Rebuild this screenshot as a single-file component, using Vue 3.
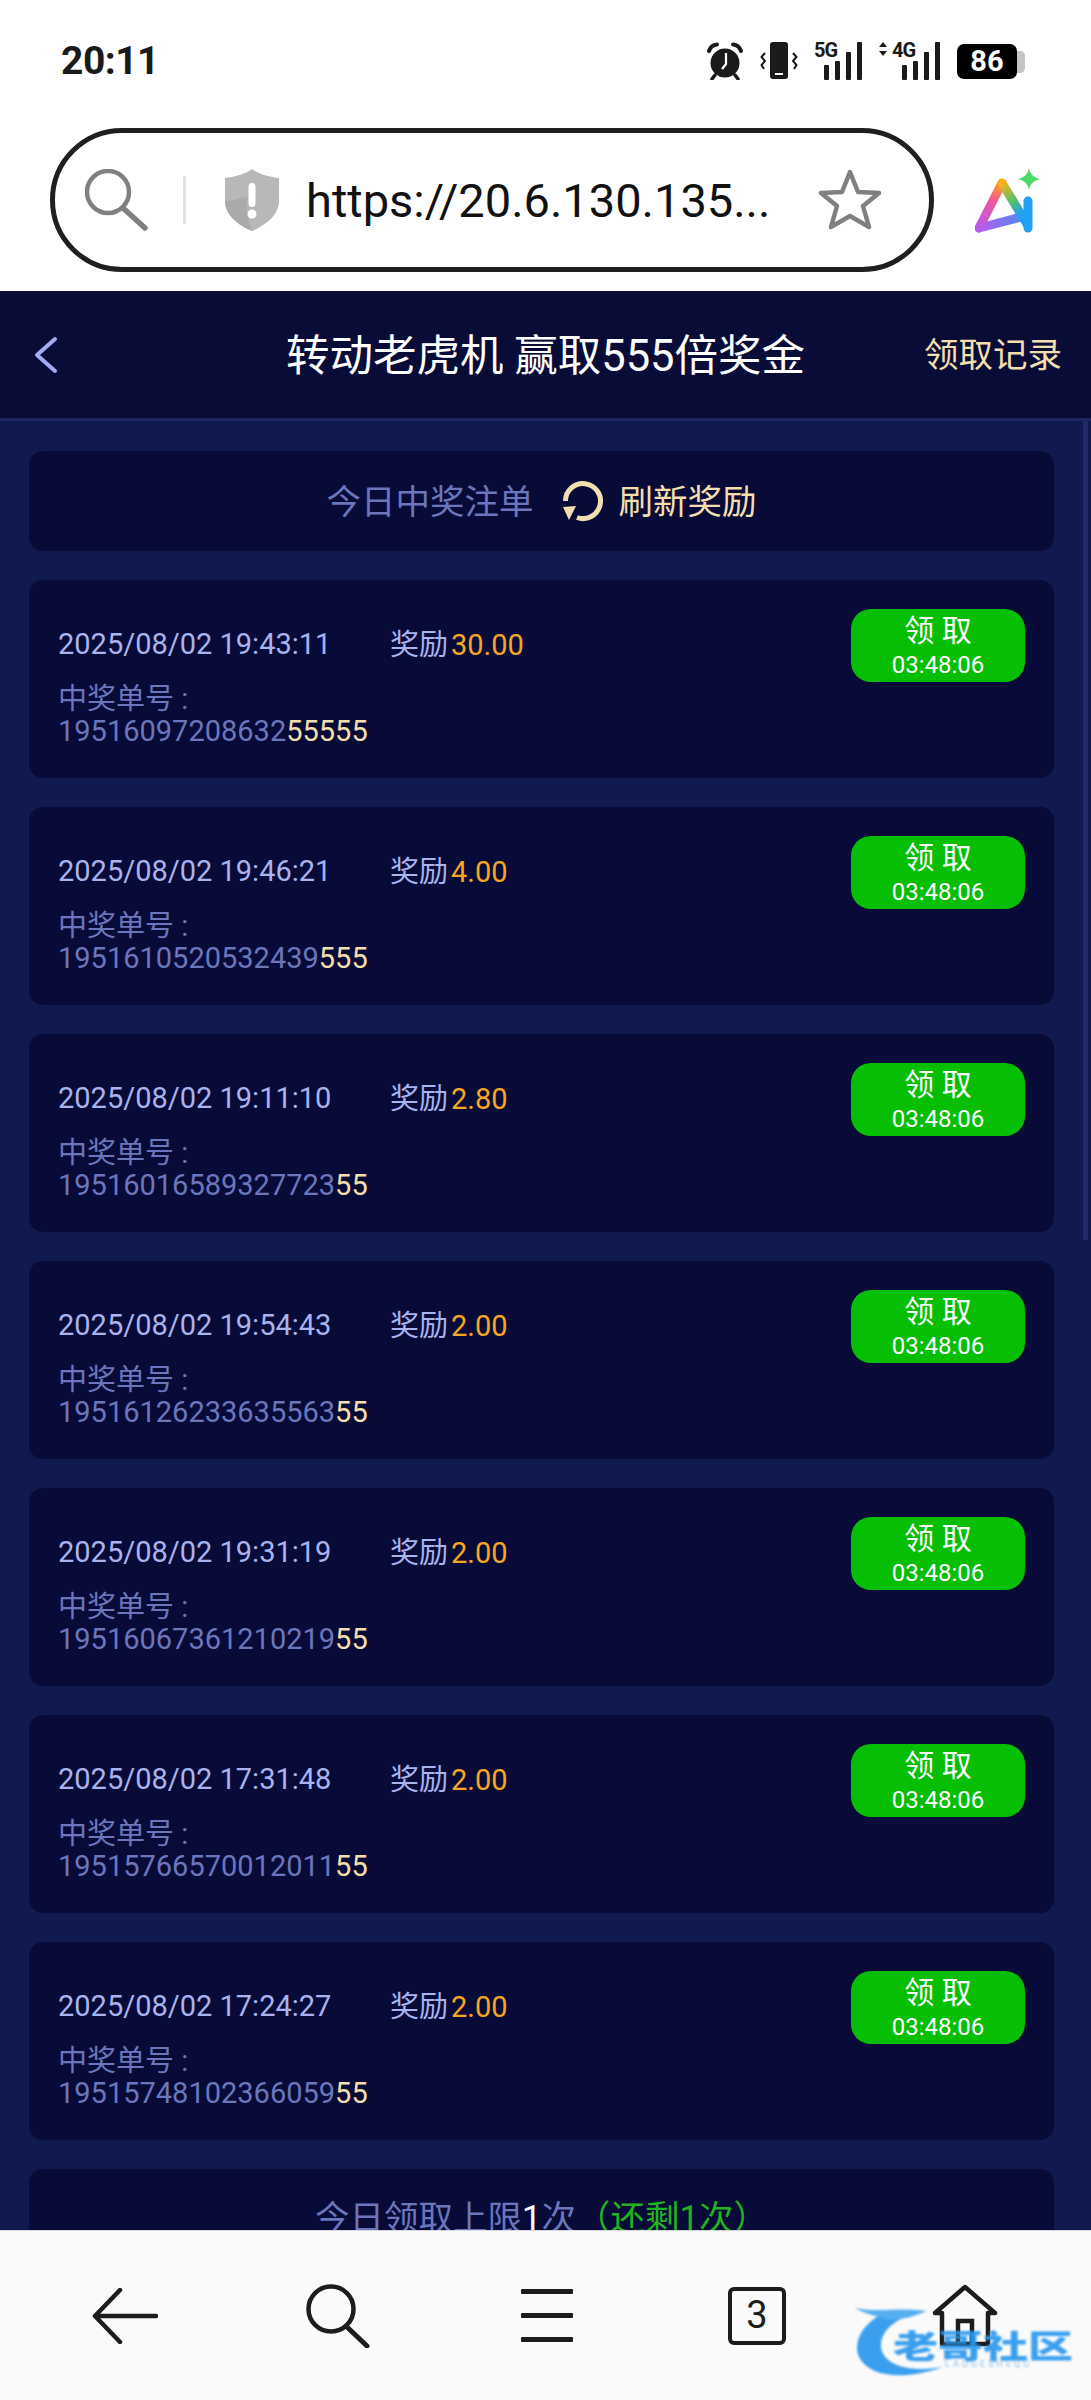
<template>
  <div class="phone">
    <div class="browser-top">
      <div class="status-bar">
        <span class="clock">20:11</span>
        <div class="status-icons">
          <svg width="38" height="38" viewBox="0 0 38 38">
            <circle cx="19" cy="21" r="14.5" fill="#1a1a1a" />
            <path d="M3 9 Q5 3 11 2.5 M35 9 Q33 3 27 2.5" fill="none" stroke="#1a1a1a" stroke-width="4" stroke-linecap="round" />
            <path d="M9 33 L6 37 M29 33 L32 37" stroke="#1a1a1a" stroke-width="3.5" stroke-linecap="round" />
            <path d="M20 11 V22 L16 27" fill="none" stroke="#fff" stroke-width="2.2" />
          </svg>
          <svg width="38" height="38" viewBox="0 0 38 38">
            <rect x="10" y="0" width="18" height="37" rx="3" fill="#1a1a1a" />
            <rect x="15" y="31" width="8" height="2" fill="#fff" />
            <path d="M5 11 L1.5 15 L5 19 L1.5 23 L4 27 M33 11 L36.5 15 L33 19 L36.5 23 L34 27" fill="none" stroke="#1a1a1a" stroke-width="2" />
          </svg>
          <div class="signal">
            <span class="net-label">5G</span>
            <svg width="49" height="38" viewBox="0 0 49 38">
              <rect x="10" y="23" width="5" height="15" rx="1" fill="#1a1a1a" />
              <rect x="21" y="19" width="5" height="19" rx="1" fill="#1a1a1a" />
              <rect x="32" y="10" width="5" height="28" rx="1" fill="#1a1a1a" />
              <rect x="43" y="0" width="5" height="38" rx="1" fill="#1a1a1a" />
            </svg>
          </div>
          <div class="signal">
            <span class="net-label net-label-4g">4G</span>
            <svg width="62" height="38" viewBox="0 0 62 38">
              <path d="M4 0 L8 5 H0 Z M4 14 L8 9 H0 Z" fill="#1a1a1a" />
              <rect x="23" y="23" width="5" height="15" rx="1" fill="#1a1a1a" />
              <rect x="34" y="19" width="5" height="19" rx="1" fill="#1a1a1a" />
              <rect x="45" y="10" width="5" height="28" rx="1" fill="#1a1a1a" />
              <rect x="56" y="0" width="5" height="38" rx="1" fill="#1a1a1a" />
            </svg>
          </div>
          <div class="battery"><span class="battery-level">86</span><i class="battery-cap"></i></div>
        </div>
      </div>
      <div class="address-row">
        <div class="address-bar">
          <svg class="addr-search" width="64" height="62" viewBox="0 0 64 62">
            <circle cx="23" cy="23" r="21" fill="none" stroke="#808080" stroke-width="4.5" />
            <path d="M38 39 L60 59" stroke="#808080" stroke-width="5.5" stroke-linecap="round" />
          </svg>
          <i class="addr-divider"></i>
          <svg class="addr-shield" width="56" height="62" viewBox="0 0 56 62">
            <path d="M28 0 C34 5 46 8 55 9 V32 C55 46 42 56 28 62 C14 56 1 46 1 32 V9 C10 8 22 5 28 0 Z" fill="#b8b8b8" />
            <path d="M1 32 C1 46 14 56 28 62 C24 50 20 38 24 28 C14 30 6 32 1 32 Z" fill="#aaaaaa" />
            <rect x="24.500" y="14" width="7" height="24" rx="3.500" fill="#fff" />
            <circle cx="28" cy="45" r="4.500" fill="#fff" />
          </svg>
          <span class="addr-url">https://20.6.130.135...</span>
          <svg class="addr-star" width="64" height="62" viewBox="0 0 64 62">
            <path d="M32 3 L40 23 L61 24 L45 37 L51 58 L32 47 L13 58 L19 37 L3 24 L24 23 Z" fill="none" stroke="#808080" stroke-width="4.500" stroke-linejoin="round" />
          </svg>
        </div>
        <svg class="ai-icon" width="68" height="66" viewBox="0 0 68 66">
          <defs>
            <linearGradient id="aiLeft" gradientUnits="userSpaceOnUse" x1="4" y1="60" x2="27" y2="15">
              <stop offset="0" stop-color="#b85cf0" />
              <stop offset="0.6" stop-color="#f0569a" />
              <stop offset="1" stop-color="#ffa516" />
            </linearGradient>
            <linearGradient id="aiBase" gradientUnits="userSpaceOnUse" x1="4" y1="60" x2="50" y2="48">
              <stop offset="0" stop-color="#b85cf0" />
              <stop offset="1" stop-color="#4a8cf5" />
            </linearGradient>
            <linearGradient id="aiRight" gradientUnits="userSpaceOnUse" x1="27" y1="15" x2="52" y2="56">
              <stop offset="0" stop-color="#ffb01a" />
              <stop offset="0.45" stop-color="#4fc06f" />
              <stop offset="0.75" stop-color="#22a0f5" />
            </linearGradient>
          </defs>
          <path d="M4 60 L50 48" fill="none" stroke="url(#aiBase)" stroke-width="9" stroke-linecap="round" />
          <path d="M4 60 L27 15" fill="none" stroke="url(#aiLeft)" stroke-width="9" stroke-linecap="round" />
          <path d="M27 15 L52 56" fill="none" stroke="url(#aiRight)" stroke-width="9" stroke-linecap="round" />
          <path d="M53 33 V60" fill="none" stroke="#22a0f5" stroke-width="9" stroke-linecap="round" />
          <path d="M54 0 C55 6 58 9 65 11 C58 13 55 16 54 22 C53 16 50 13 43 11 C50 9 53 6 54 0 Z" fill="#4cd964" />
        </svg>
      </div>
    </div>

    <header class="nav-bar">
      <svg class="nav-back" width="24" height="38" viewBox="0 0 24 38">
        <path d="M21 3 L3 19 L21 35" fill="none" stroke="#a3abf2" stroke-width="4" stroke-linecap="round" stroke-linejoin="round" />
      </svg>
      <h1 class="nav-title">转动老虎机 赢取555倍奖金</h1>
      <span class="nav-record">领取记录</span>
    </header>

    <main class="content">
      <i class="scroll-thumb"></i>
      <section class="panel head-panel">
        <span class="head-label">今日中奖注单</span>
        <svg class="refresh" width="42" height="42" viewBox="0 0 42 42">
          <path d="M2.500 21 A17.500 17.500 0 1 1 14 37.500" fill="none" stroke="#f3dfae" stroke-width="5" />
          <path d="M0 27 L13 26 L6 40 Z" fill="#f3dfae" />
        </svg>
        <span class="head-refresh">刷新奖励</span>
      </section>

      <section v-for="item in records" :key="item.time" class="panel record">
        <div class="record-info">
          <div class="record-top">
            <span class="record-time">2025/08/02 {{ item.time }}</span>
            <span class="record-reward">奖励<b>{{ item.reward }}</b></span>
          </div>
          <div class="record-no-label">中奖单号 :</div>
          <div class="record-no">{{ item.no }}<em>{{ item.lucky }}</em></div>
        </div>
        <button class="claim" type="button">
          <span class="claim-text">领 取</span>
          <span class="claim-timer">03:48:06</span>
        </button>
      </section>

      <section class="panel limit-panel">
        今日领取上限<span class="limit-num">1</span>次<span class="limit-left">（还剩1次）</span>
      </section>
    </main>

    <footer class="bottom-bar">
      <div class="bottom-item">
        <svg width="66" height="56" viewBox="0 0 66 56">
          <path d="M28 2 L3 28 L28 54 M3 28 H64" fill="none" stroke="#1c1c1c" stroke-width="4.500" stroke-linecap="round" stroke-linejoin="round" />
        </svg>
      </div>
      <div class="bottom-item item-search">
        <svg width="64" height="64" viewBox="0 0 64 64">
          <circle cx="25" cy="25" r="22.500" fill="none" stroke="#1c1c1c" stroke-width="4.500" />
          <path d="M41 43 L61 62" stroke="#1c1c1c" stroke-width="5" stroke-linecap="round" />
        </svg>
      </div>
      <div class="bottom-item menu-icon"><i></i><i></i><i></i></div>
      <div class="bottom-item item-tabs">
        <div class="tab-count">3</div>
      </div>
      <div class="bottom-item">
        <svg width="66" height="64" viewBox="0 0 66 64">
          <path d="M3 29 L33 3 L63 29 H56 V60 H10 V29 Z" fill="none" stroke="#1c1c1c" stroke-width="4.500" stroke-linejoin="round" />
          <rect x="26" y="37" width="14" height="23" fill="none" stroke="#1c1c1c" stroke-width="4.500" />
        </svg>
      </div>

      <div class="watermark">
        <svg class="wm-dragon" width="130" height="78" viewBox="0 0 130 78">
          <path d="M30 8 C8 20 0 38 6 52 C16 72 50 76 90 62 C56 68 30 60 28 42 C27 30 36 20 48 14 Z" fill="#2a98ee" />
          <path d="M2 3 C30 8 40 2 74 6 C60 12 50 14 40 15 C24 12 10 8 2 3 Z" fill="#4aa9f2" />
        </svg>
        <span class="wm-name">老哥社区</span>
        <span class="wm-sub">LAOGESHEQU</span>
      </div>
    </footer>
  </div>
</template>

<script setup>
const records = [
  { time: '19:43:11', reward: '30.00', no: '19516097208632', lucky: '55555' },
  { time: '19:46:21', reward: '4.00', no: '1951610520532439', lucky: '555' },
  { time: '19:11:10', reward: '2.80', no: '19516016589327723', lucky: '55' },
  { time: '19:54:43', reward: '2.00', no: '19516126233635563', lucky: '55' },
  { time: '19:31:19', reward: '2.00', no: '19516067361210219', lucky: '55' },
  { time: '17:31:48', reward: '2.00', no: '19515766570012011', lucky: '55' },
  { time: '17:24:27', reward: '2.00', no: '19515748102366059', lucky: '55' },
];
</script>

<style>
html, body {
  margin: 0;
  background: #fff;
}
</style>

<style scoped>
.phone {
  width: 1091px;
  height: 2400px;
  display: flex;
  flex-direction: column;
  overflow: hidden;
  font-family: Roboto, "Noto Sans CJK SC", sans-serif;
}
.browser-top {
  height: 291px;
  flex: none;
  background: #fff;
}
.status-bar {
  height: 128px;
  padding: 42px 66px 0 61px;
  box-sizing: border-box;
  display: flex;
  justify-content: space-between;
  align-items: flex-start;
}
.clock {
  font-size: 39px;
  font-weight: 700;
  line-height: 38px;
  letter-spacing: -0.5px;
  color: #1a1a1a;
}
.status-icons {
  display: flex;
  gap: 16px;
  align-items: flex-start;
}
.signal {
  position: relative;
  height: 38px;
}
.net-label {
  position: absolute;
  left: 0;
  top: 0;
  font-size: 20px;
  font-weight: 700;
  line-height: 17px;
  letter-spacing: -1px;
  color: #1a1a1a;
}
.net-label-4g {
  left: 13px;
}
.battery {
  display: flex;
  align-items: center;
  margin-top: 2px;
}
.battery-level {
  width: 60px;
  height: 35px;
  background: #000;
  color: #fff;
  border-radius: 7px;
  font-size: 29px;
  font-weight: 700;
  line-height: 35px;
  text-align: center;
}
.battery-cap {
  width: 8px;
  height: 22px;
  background: #c4c4c4;
  border-radius: 0 5px 5px 0;
}
.address-row {
  display: flex;
  align-items: center;
  padding-left: 50px;
}
.address-bar {
  width: 884px;
  height: 144px;
  box-sizing: border-box;
  border: 5px solid #1f1f1f;
  border-radius: 72px;
  display: flex;
  align-items: center;
  padding-left: 30px;
}
.addr-divider {
  width: 3px;
  height: 48px;
  background: #e2e2e2;
  margin: 0 38px 0 34px;
}
.addr-url {
  font-size: 47px;
  color: #111;
  margin-left: 26px;
  white-space: nowrap;
  width: 512px;
}
.addr-star {
  margin-left: 0;
}
.ai-icon {
  margin-left: 41px;
  margin-top: 2px;
}
.nav-bar {
  height: 130px;
  flex: none;
  box-sizing: border-box;
  background: #0a0c38;
  border-bottom: 3px solid #1b2662;
  display: flex;
  align-items: center;
  justify-content: space-between;
  padding: 0 29px 0 34px;
  position: relative;
}
.nav-title {
  position: absolute;
  left: 0;
  right: 0;
  margin: 0 0 5px;
  text-align: center;
  font-size: 43.500px;
  font-weight: 400;
  color: #fff;
}
.nav-record {
  font-size: 34.500px;
  color: #f3dfae;
  margin-bottom: 5px;
}
.content {
  flex: 1;
  min-height: 0;
  overflow: hidden;
  background: #111a4e;
  padding: 30px 37px 0 29px;
  display: flex;
  flex-direction: column;
  gap: 29px;
  position: relative;
}
.scroll-thumb {
  position: absolute;
  right: 3px;
  top: 0;
  width: 5px;
  height: 819px;
  background: #1f2a6a;
}
.panel {
  flex: none;
  background: #080b38;
  border-radius: 14px;
}
.head-panel {
  height: 100px;
  display: flex;
  align-items: center;
  justify-content: center;
  font-size: 34.500px;
}
.head-label,
.head-refresh {
  margin-bottom: 5px;
}
.head-label {
  color: #6c76bc;
}
.refresh {
  margin: 0 14px 0 29px;
}
.head-refresh {
  color: #f3dfae;
}
.record {
  height: 198px;
  box-sizing: border-box;
  padding: 29px;
  display: flex;
  justify-content: space-between;
  align-items: flex-start;
}
.record-info {
  padding-top: 15px;
}
.record-top {
  display: flex;
  height: 40px;
  align-items: center;
  font-size: 29px;
  color: #a9b3ee;
  margin-bottom: 18px;
}
.record-time {
  width: 332px;
}
.record-reward {
  margin-bottom: 5px;
}
.record-reward b {
  font-weight: 400;
  color: #f5a623;
  margin-left: 3px;
}
.record-no-label,
.record-no {
  height: 33px;
  line-height: 33px;
  font-size: 29px;
  color: #6c76bc;
}
.record-no-label {
  position: relative;
  top: 1px;
}
.record-no em {
  font-style: normal;
  color: #f3dfae;
}
.claim {
  width: 174px;
  height: 73px;
  border: none;
  border-radius: 20px;
  background: #06be04;
  color: #fff;
  padding: 0;
  font-family: inherit;
  display: flex;
  flex-direction: column;
  align-items: center;
  justify-content: center;
}
.claim-text {
  font-size: 30px;
  line-height: 38px;
}
.claim-timer {
  font-size: 24px;
  line-height: 30px;
}
.limit-panel {
  height: 100px;
  padding-top: 21px;
  box-sizing: border-box;
  text-align: center;
  font-size: 34.500px;
  color: #6c76bc;
}
.limit-num {
  color: #fff;
}
.limit-left {
  color: #1fb41f;
}
.bottom-bar {
  height: 170px;
  flex: none;
  box-sizing: border-box;
  background: #fafafa;
  border-top: 1px solid #d8d8de;
  display: flex;
  align-items: center;
  padding: 0 20px;
  position: relative;
  z-index: 1;
}
.bottom-item {
  width: 210px;
  display: flex;
  justify-content: center;
  align-items: center;
}
.item-search {
  padding-left: 6px;
  box-sizing: border-box;
}
.item-tabs {
  padding-left: 4px;
  box-sizing: border-box;
}
.menu-icon {
  flex-direction: column;
  gap: 19px;
  padding-left: 4px;
  box-sizing: border-box;
}
.menu-icon i {
  width: 52px;
  height: 5px;
  border-radius: 1px;
  background: #1c1c1c;
}
.tab-count {
  width: 58px;
  height: 58px;
  box-sizing: border-box;
  border: 4.500px solid #1c1c1c;
  border-radius: 6px;
  text-align: center;
  font-size: 38px;
  line-height: 49px;
  color: #1c1c1c;
}
.watermark {
  position: absolute;
  left: 853px;
  top: 74px;
  width: 225px;
  height: 80px;
  filter: blur(0.8px);
  opacity: 0.92;
}
.wm-dragon {
  position: absolute;
  left: 0;
  top: 0;
}
.wm-name {
  position: absolute;
  left: 40px;
  top: 14px;
  font-size: 45px;
  line-height: 50px;
  font-weight: 900;
  white-space: nowrap;
  color: #2a98ee;
  font-family: "Noto Sans CJK SC", sans-serif;
  transform: scaleY(0.72);
}
.wm-sub {
  position: absolute;
  left: 92px;
  top: 53px;
  font-size: 9px;
  line-height: 12px;
  letter-spacing: 3px;
  color: #7dbdf0;
}
</style>
